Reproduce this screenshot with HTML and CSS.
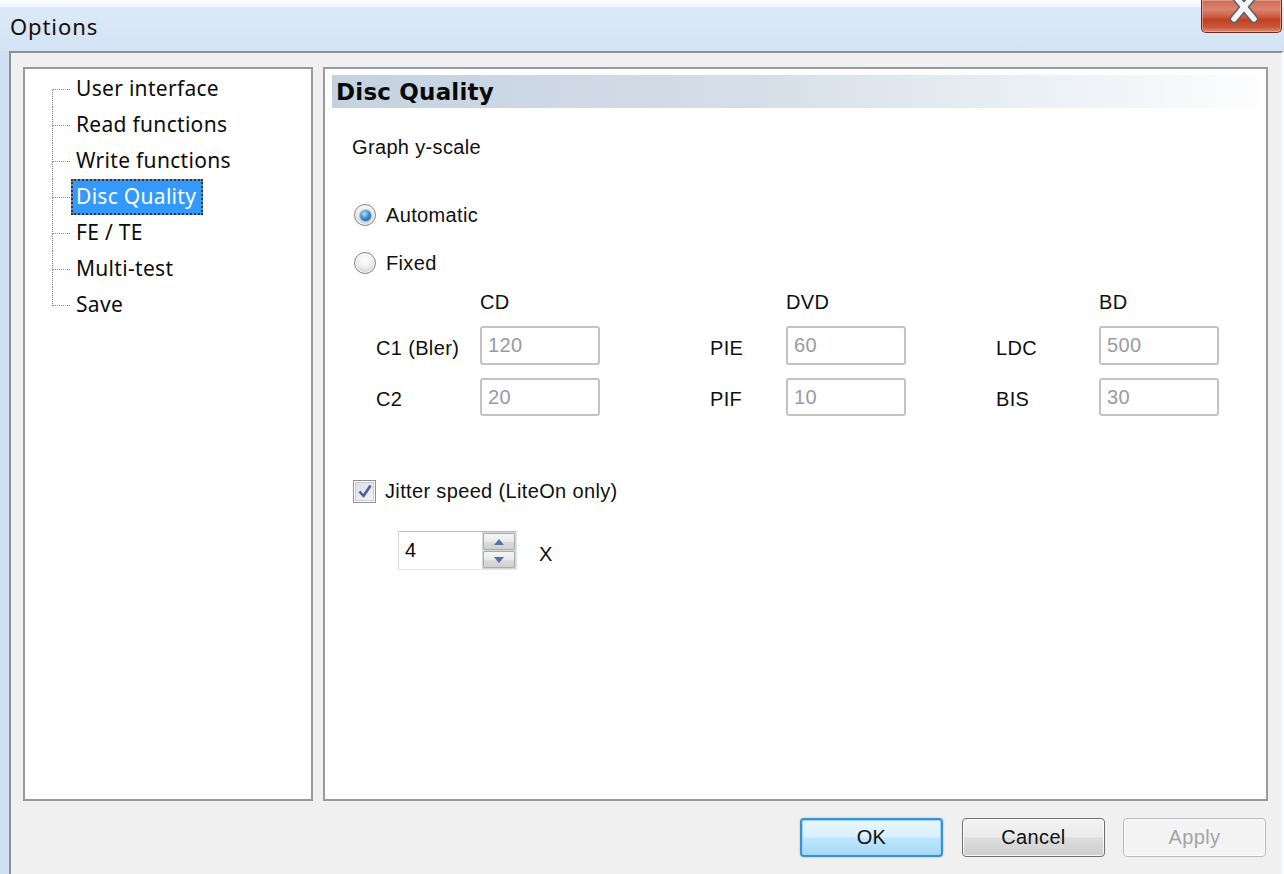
FILE: index.html
```html
<!DOCTYPE html>
<html lang="en">
<head>
<meta charset="utf-8">
<title>Options</title>
<link rel="stylesheet" href="styles.css">
</head>
<body>
<div class="window">
  <header class="titlebar">
    <span class="title">Options</span>
    <button class="close" type="button" aria-label="Close">
      <svg class="close-glyph" width="30" height="32" viewBox="0 0 30 32">
        <path d="M5 4 L25 28 M25 4 L5 28" stroke="#5d5f66" stroke-width="8.5" stroke-linecap="round" fill="none"/>
        <path d="M5 4 L25 28 M25 4 L5 28" stroke="#f4f4f6" stroke-width="5.5" stroke-linecap="round" fill="none"/>
      </svg>
    </button>
  </header>

  <div class="frame">
    <div class="client">
      <div class="panes">
        <ul class="tree">
          <li class="node first"><span class="branch"></span><span class="label">User interface</span></li>
          <li class="node"><span class="branch"></span><span class="label">Read functions</span></li>
          <li class="node"><span class="branch"></span><span class="label">Write functions</span></li>
          <li class="node"><span class="branch"></span><span class="label selected">Disc Quality</span></li>
          <li class="node"><span class="branch"></span><span class="label">FE / TE</span></li>
          <li class="node"><span class="branch"></span><span class="label">Multi-test</span></li>
          <li class="node last"><span class="branch"></span><span class="label">Save</span></li>
        </ul>

        <section class="page">
          <h1 class="page-head">Disc Quality</h1>
          <div class="page-body">
            <p class="caption">Graph y-scale</p>

            <div class="option-row auto"><span class="radio checked"></span><span>Automatic</span></div>
            <div class="option-row fixed"><span class="radio"></span><span>Fixed</span></div>

            <div class="limits">
              <span></span><span class="col-head">CD</span><span></span>
              <span></span><span class="col-head">DVD</span><span></span>
              <span></span><span class="col-head">BD</span>

              <span class="field-label">C1 (Bler)</span><span class="field">120</span><span></span>
              <span class="field-label">PIE</span><span class="field">60</span><span></span>
              <span class="field-label">LDC</span><span class="field">500</span>

              <span class="field-label">C2</span><span class="field">20</span><span></span>
              <span class="field-label">PIF</span><span class="field">10</span><span></span>
              <span class="field-label">BIS</span><span class="field">30</span>
            </div>

            <div class="option-row jitter">
              <span class="check">
                <svg width="16" height="16" viewBox="0 0 16 16"><path d="M2.5 8.5 L6.5 13 L13.5 2.5" stroke="#4c5f98" stroke-width="2.6" fill="none" stroke-linejoin="round"/></svg>
              </span>
              <span>Jitter speed (LiteOn only)</span>
            </div>

            <div class="speed-row">
              <div class="spin">
                <span class="spin-value">4</span>
                <span class="spin-btns">
                  <span class="spin-btn"><svg width="10" height="6" viewBox="0 0 10 6"><path d="M0 6 L5 0 L10 6 Z" fill="#5370a8"/></svg></span>
                  <span class="spin-btn"><svg width="10" height="6" viewBox="0 0 10 6"><path d="M0 0 L10 0 L5 6 Z" fill="#5370a8"/></svg></span>
                </span>
              </div>
              <span class="unit">X</span>
            </div>
          </div>
        </section>
      </div>

      <div class="buttons">
        <button class="btn default" type="button">OK</button>
        <button class="btn" type="button">Cancel</button>
        <button class="btn disabled" type="button" disabled>Apply</button>
      </div>
    </div>
  </div>
</div>
</body>
</html>
```

FILE: styles.css
```css
* {
  box-sizing: border-box;
}

html, body {
  margin: 0;
  padding: 0;
  width: 1284px;
  height: 874px;
  overflow: hidden;
  background: #f5f8fc;
}

.window {
  width: 1284px;
  height: 874px;
  display: flex;
  flex-direction: column;
  font-family: "Liberation Sans", Arial, sans-serif;
  font-size: 20px;
  letter-spacing: 0.35px;
  color: #101010;
}

/* ---------- title bar ---------- */
.titlebar {
  height: 51px;
  flex: none;
  display: flex;
  align-items: center;
  background: linear-gradient(to bottom, #fbfdff 0, #f4f8fd 6px, #dce9f7 8px, #d4e4f5 100%);
}

.title {
  padding-left: 10px;
  padding-top: 1px;
  font-family: "Noto Sans", "Open Sans", sans-serif;
  font-size: 22px;
  letter-spacing: 0.9px;
  color: #111;
}

.close {
  align-self: flex-start;
  margin-left: auto;
  margin-right: 2px;
  width: 81px;
  height: 33px;
  padding: 0;
  border: 1px solid #6b2a22;
  border-top: none;
  border-radius: 0 0 5px 5px;
  background: linear-gradient(to bottom, #cf6a55 0%, #d98471 30%, #cf5a3f 52%, #c0401f 62%, #c9583b 85%, #d98b72 100%);
  box-shadow: inset 0 0 0 1px rgba(255, 210, 200, 0.45);
  display: flex;
  justify-content: center;
  align-items: flex-start;
  overflow: hidden;
}

.close-glyph {
  margin-top: -9px;
  margin-left: 4px;
}

/* ---------- frame & client ---------- */
.frame {
  flex: 1;
  display: flex;
  padding-left: 9px;
  background: #cfe0f3;
}

.client {
  flex: 1;
  display: flex;
  flex-direction: column;
  background: #f0f0f0;
  border-left: 2px solid #8b9096;
  border-top: 2px solid #8b9096;
  border-right: 3px solid #f6f8fb;
  padding: 14px 13px 0 12px;
}

.panes {
  height: 734px;
  display: flex;
  gap: 10px;
}

/* ---------- tree ---------- */
.tree {
  width: 290px;
  flex: none;
  margin: 0;
  padding: 2px 0 0 27px;
  list-style: none;
  background: #fff;
  border: 2px solid #979a9f;
  font-family: "Noto Sans", "Open Sans", sans-serif;
  font-size: 21px;
  letter-spacing: 0.3px;
  color: #0c0c0c;
}

.node {
  height: 36px;
  display: flex;
  align-items: stretch;
}

.branch {
  width: 19px;
  flex: none;
  display: flex;
  flex-direction: column;
}

.branch::before,
.branch::after {
  content: "";
  flex: 1;
  border-left: 1px dotted #8c8c8c;
}

.branch::before {
  border-bottom: 1px dotted #8c8c8c;
  margin-right: 1px;
}

.node.first .branch::before {
  border-left-color: transparent;
}

.node.last .branch::after {
  border-left-color: transparent;
}

.label {
  display: flex;
  align-items: center;
  padding: 0 5px 2px 3px;
  white-space: nowrap;
  border: 2px solid transparent;
}

.label.selected {
  background: #3399ff;
  color: #fff;
  border: 2px dotted #4a3414;
}

/* ---------- property page ---------- */
.page {
  flex: 1;
  display: flex;
  flex-direction: column;
  background: #fff;
  border: 2px solid #979a9f;
  padding: 6px 6px 0 7px;
}

.page-head {
  margin: 0;
  height: 33px;
  display: flex;
  align-items: center;
  padding-left: 4px;
  font-family: "DejaVu Sans", sans-serif;
  font-weight: bold;
  font-size: 23px;
  letter-spacing: 0.2px;
  color: #080808;
  background: linear-gradient(to right, #c4d2e0 0%, #d5dee8 45%, #eef2f6 80%, #fdfdfe 100%);
}

.page-body {
  padding-left: 20px;
  display: flex;
  flex-direction: column;
  align-items: flex-start;
}

.caption {
  margin: 27px 0 0 0;
  line-height: 24px;
  height: 24px;
}

.option-row {
  height: 24px;
  display: flex;
  align-items: center;
  gap: 10px;
  margin-left: 2px;
}

.option-row.auto {
  margin-top: 44px;
}

.option-row.fixed {
  margin-top: 24px;
}

.radio {
  width: 22px;
  height: 22px;
  flex: none;
  border-radius: 50%;
  border: 1px solid #84878c;
  background: radial-gradient(circle at 50% 35%, #ffffff 0%, #eeeeee 45%, #d0d0d0 80%, #c0c0c0 100%);
  box-shadow: inset 0 0 0 1px rgba(255, 255, 255, 0.8);
  display: flex;
  align-items: center;
  justify-content: center;
}

.radio.checked::after {
  content: "";
  width: 11px;
  height: 11px;
  border-radius: 50%;
  background: radial-gradient(circle at 40% 35%, #b6e2fb 0%, #4a98d6 40%, #165a9c 85%, #0f3f73 100%);
  box-shadow: 0 0 1px 1px rgba(40, 80, 130, 0.35);
}

/* limit fields */
.limits {
  margin-top: 15px;
  margin-left: 24px;
  display: grid;
  grid-template-columns: 104px 120px 110px 76px 120px 90px 103px 120px;
  grid-template-rows: 24px 39px 39px;
  row-gap: 12px;
  align-items: center;
}

.limits > :nth-child(n+9) {
  align-self: stretch;
}

.col-head {
  line-height: 24px;
}

.field-label {
  display: flex;
  align-items: center;
  padding-top: 5px;
}

.field {
  display: flex;
  align-items: center;
  padding-left: 6px;
  border: 2px solid #c3c3c3;
  border-radius: 3px;
  background: #fff;
  color: #9a9aa4;
}

.limits > :nth-child(n+17) {
  margin-top: 1px;
}

/* jitter checkbox */
.option-row.jitter {
  margin-top: 63px;
  gap: 9px;
  margin-left: 1px;
}

.check {
  width: 23px;
  height: 23px;
  flex: none;
  border: 1px solid #8f9196;
  background: linear-gradient(to bottom right, #d9dde6, #f4f5f8);
  box-shadow: inset 0 0 0 1px #fff, inset 0 0 0 2px #c8ccd6;
  display: flex;
  align-items: center;
  justify-content: center;
}

.speed-row {
  margin-top: 28px;
  margin-left: 46px;
  display: flex;
  align-items: center;
  gap: 22px;
}

.spin {
  width: 119px;
  height: 39px;
  display: flex;
  border: 1px solid #e2e5ea;
  border-top-color: #b7bcc4;
  border-left-color: #d6dadf;
  background: #fff;
}

.spin-value {
  flex: 1;
  display: flex;
  align-items: center;
  padding-left: 6px;
  color: #0a0a0a;
}

.spin-btns {
  width: 34px;
  display: flex;
  flex-direction: column;
  padding: 1px;
  gap: 1px;
  background: #d4d6da;
}

.spin-btn {
  flex: 1;
  display: flex;
  align-items: center;
  justify-content: center;
  background: linear-gradient(to bottom, #f6f6f6 0%, #e9e9e9 50%, #dcdcdc 51%, #d0d0d0 100%);
  border: 1px solid #a9acb2;
  border-radius: 2px;
}

.unit {
  padding-top: 7px;
}

/* ---------- dialog buttons ---------- */
.buttons {
  margin-top: 17px;
  margin-right: 2px;
  display: flex;
  justify-content: flex-end;
  gap: 18px;
}

.btn {
  width: 143px;
  height: 39px;
  padding: 0 0 1px 0;
  font-family: "Liberation Sans", Arial, sans-serif;
  font-size: 20px;
  letter-spacing: 0.35px;
  color: #101010;
  border: 1px solid #707070;
  border-radius: 4px;
  background: linear-gradient(to bottom, #f3f3f3 0%, #ebebeb 48%, #dddddd 52%, #cfcfcf 100%);
  box-shadow: inset 0 0 0 1px rgba(255, 255, 255, 0.85);
}

.btn.default {
  margin-right: 1px;
  border: 2px solid #3c8fd0;
  background: linear-gradient(to bottom, #eaf6fd 0%, #d9f0fc 48%, #bee6fd 52%, #a7d9f5 100%);
  box-shadow: inset 0 0 0 1px #9ad7f7, 0 0 2px rgba(60, 140, 210, 0.5);
}

.btn.disabled {
  color: #a2a4a8;
  border: 1px solid #b8bcc0;
  background: #f4f4f4;
  box-shadow: inset 0 0 0 1px #fbfbfb;
}
```
